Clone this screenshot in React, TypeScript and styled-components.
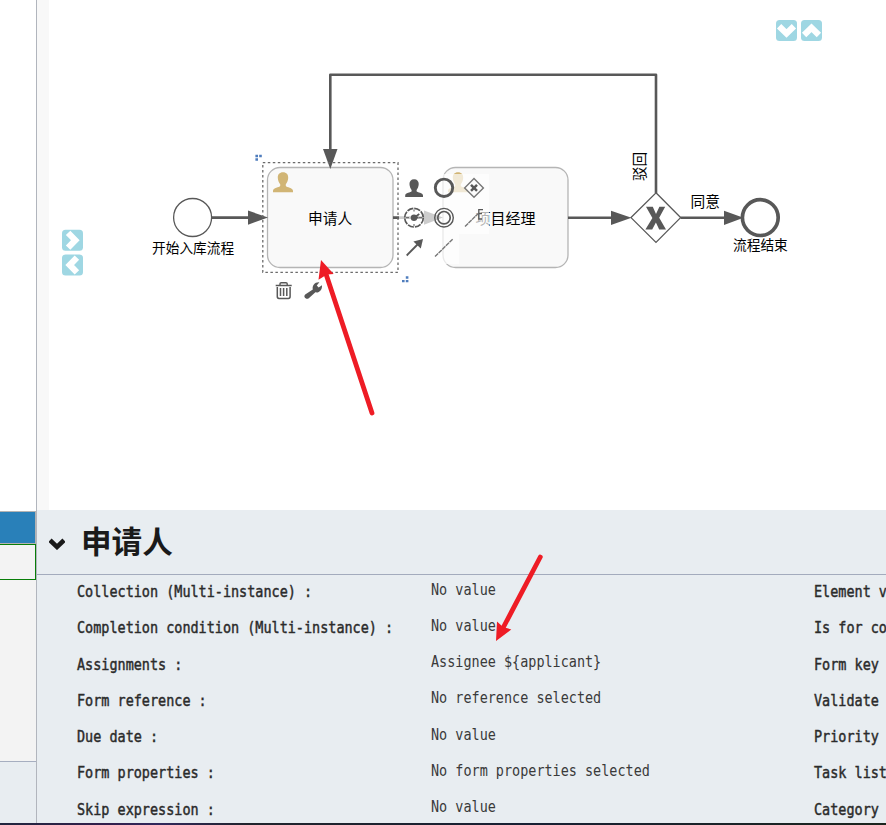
import React from "react";
import styled, { createGlobalStyle } from "styled-components";

const cjk = `"Noto Sans CJK SC", sans-serif`;
const ink = "#585858";

const GlobalStyle = createGlobalStyle`
  * { box-sizing: border-box; }
  body { margin: 0; background: #fff; overflow: hidden; }
`;

const Page = styled.div`
  position: relative;
  width: 886px;
  height: 825px;
  display: flex;
  flex-direction: column;
  background: #fff;
  overflow: hidden;
`;

const Workspace = styled.div`
  flex: 1;
  min-height: 0;
  display: flex;
`;

const Sidebar = styled.aside`
  width: 37px;
  display: flex;
  flex-direction: column;
  border-right: 1px solid #b1b5bd;
`;

const TreeBlank = styled.div`
  height: 511px;
`;

const TreeHeader = styled.div`
  height: 33px;
  background: #2980b9;
  border: solid #b3b3b3;
  border-width: 1px 1px 1px 0;
`;

const TreeSelected = styled.div`
  height: 36px;
  background: #f3f3f3;
  border: 1px solid #087d08;
  border-left: 0;
`;

const TreeBody = styled.div`
  height: 181px;
  background: #f3f3f3;
`;

const SidebarFooter = styled.div`
  flex: 1;
  background: #e8edf1;
  border-top: 1px solid #a6aec0;
`;

const Main = styled.main`
  flex: 1;
  min-width: 0;
  display: flex;
  flex-direction: column;
`;

const Canvas = styled.section`
  height: 510px;
  display: flex;
`;

const Gutter = styled.div`
  width: 12px;
  background: #f8f8f8;
`;

const Properties = styled.section`
  flex: 1;
  min-height: 0;
  background: #e8edf1;
  overflow: hidden;
`;

const PropertiesHeader = styled.header`
  height: 65px;
  display: flex;
  align-items: center;
  gap: 16px;
  padding-left: 12px;
  border-bottom: 1px solid #a3abbd;
`;

const Chevron = styled.svg`
  width: 16px;
  height: 12px;
  margin-top: 4px;
`;

const Title = styled.h1`
  margin: 0 0 4px;
  font: 700 30.6px/44px ${cjk};
  color: #1a1a1a;
`;

const PropertyGrid = styled.div`
  display: grid;
  grid-template-columns: 354px 383px 72px;
  grid-auto-rows: 36.25px;
  padding-left: 40px;
`;

const Cell = styled.div<{ $value?: boolean }>`
  height: 36px;
  padding-top: ${(p) => (p.$value ? 3.5 : 6)}px;
  font: 16px/22px "DejaVu Sans Mono", monospace;
  color: ${(p) => (p.$value ? "#3a3a3a" : "#2b2b2b")};
  -webkit-text-stroke: ${(p) => (p.$value ? 0 : 0.45)}px #2b2b2b;
  white-space: pre;
`;

const Condensed = styled.span`
  display: inline-block;
  transform: scale(0.8415, 1.04);
  transform-origin: left center;
`;

const BottomEdge = styled.footer`
  height: 2px;
  background: linear-gradient(90deg, #20263e, #321f4c 12%, #30285c 18%, #20242c 28%, #172033 60%, #1b251e);
`;

const Overlay = styled.svg`
  position: absolute;
  inset: 0;
  pointer-events: none;
`;

const Label = styled.text<{ $size: number }>`
  font: ${(p) => p.$size}px ${cjk};
  fill: #000;
`;

const rows = [
  ["Collection (Multi-instance) :", "No value", "Element v"],
  ["Completion condition (Multi-instance) :", "No value", "Is for co"],
  ["Assignments :", "Assignee ${applicant}", "Form key"],
  ["Form reference :", "No reference selected", "Validate"],
  ["Due date :", "No value", "Priority"],
  ["Form properties :", "No form properties selected", "Task list"],
  ["Skip expression :", "No value", "Category"],
];

const User = ({ x, y, color, size = 20 }: { x: number; y: number; color: string; size?: number }) => (
  <path
    transform={`translate(${x} ${y}) scale(${size / 20})`}
    fill={color}
    d="M10 0C6.5 0 4.7 2.3 4.8 5.5C4.9 8.4 6 10.6 7.2 12V13.6C6.4 15 0 15.2 0 18.4V20H20V18.4C20 15.2 13.6 15 12.8 13.6V12C14 10.6 15.1 8.4 15.2 5.5C15.3 2.3 13.5 0 10 0Z"
  />
);

const Scroll = ({ x, y, turn }: { x: number; y: number; turn: number }) => (
  <g transform={`translate(${x} ${y}) rotate(${turn})`}>
    <rect x="-10.5" y="-10.5" width="21" height="21" rx="3.5" fill="#9fd7e3" />
    <path d="M-7.4 -4.4L0 2.8L7.4 -4.4" fill="none" stroke="#fff" strokeWidth="6.2" />
  </g>
);

const Diagram = () => (
  <svg width="837" height="510" viewBox="49 0 837 510">
    <rect x="267.5" y="167.5" width="125.5" height="100" rx="12.5" fill="#f9f9f9" stroke="#b5b5b5" strokeWidth="1.3" />
    <rect x="443" y="167.5" width="125" height="100" rx="12.5" fill="#f9f9f9" stroke="#b5b5b5" strokeWidth="1.3" />
    <User x={273} y={172.3} color="#d1b575" />
    <User x={448} y={172.3} color="#d1b575" />
    <g fill="none" stroke={ink} strokeWidth="2.6" strokeLinejoin="round">
      <path d="M212 217.6H250M393 217.6H426M568 217.8H613M680.5 217.8H726M656 193V74.8H330.3V151" />
    </g>
    <g fill={ink}>
      <path d="M248 210.5V224.7L268 217.6Z" />
      <path d="M424 210.5V224.7L443 217.6Z" />
      <path d="M611 210.7V224.9L631.5 217.8Z" />
      <path d="M724 210.7V224.9L743.5 217.8Z" />
      <path d="M323 149H337.5L330.3 169Z" />
    </g>
    <circle cx="192.6" cy="217.5" r="19" fill="#fff" stroke={ink} strokeWidth="1.3" />
    <circle cx="760.3" cy="217.6" r="17.9" fill="#fff" stroke={ink} strokeWidth="3.7" />
    <path d="M656 192.8L680.6 217.6L656 242.4L631 217.6Z" fill="#fff" stroke={ink} strokeWidth="1.3" />
    <path d="M646 206.8H652.8L656 213.9L659.4 206.8H665.2L659.2 217.8L666 229.6H659.2L655.9 222.6L652.2 229.6H645.4L652.4 217.9Z" fill={ink} />
    <Label $size={14.7} x="308" y="223.6">申请人</Label>
    <Label $size={15} x="475.5" y="223.6">项目经理</Label>
    <Label $size={13.7} x="152" y="252.6">开始入库流程</Label>
    <Label $size={13.7} x="733" y="250.4">流程结束</Label>
    <Label $size={14.7} x="690.5" y="207.4">同意</Label>
    <Label $size={14.6} transform="translate(644.7 181) rotate(-90)">驳回</Label>
    <rect x="262.8" y="162.6" width="135.2" height="109.7" fill="none" stroke="#6b6b6b" strokeWidth="1.3" strokeDasharray="2.5 2.5" />
    <path d="M399 174H489V234H459V264H399Z" fill="#fff" fillOpacity=".7" />

    <User x={405.2} y={179.2} color={ink} size={17.8} />
    <circle cx="444" cy="187.8" r="8.7" fill="none" stroke={ink} strokeWidth="2.9" />
    <g fill="none" stroke={ink}>
      <path d="M474 178.5L483.4 187.9L474 197.3L464.6 187.9Z" stroke="#777" strokeWidth="1.4" />
      <path d="M471 184.9L477 190.9M477 184.9L471 190.9" strokeWidth="2.5" />
      <circle cx="414" cy="217.7" r="9.3" strokeWidth="1.7" strokeDasharray="6.3 1" />
      <circle cx="444" cy="217.7" r="9.3" strokeWidth="1.4" />
      <circle cx="444" cy="217.7" r="6.2" strokeWidth="1.7" />
      <path d="M406 217.7H409M414 209.5V211.5M414 224V226M419 217.7H422" strokeWidth="1" />
      <path d="M414 217.7L419.3 214M414 217.7H418.5" strokeWidth="1.7" />
      <path d="M465 226.5L478 213.7" stroke="#777" strokeWidth="1.4" strokeDasharray="4.4 .5" />
      <path d="M483 209.7H478.8V219H482M478.8 213.5H482" strokeWidth="1.3" />
      <path d="M406.7 255.5L418 244" strokeWidth="1.8" />
      <path d="M435 256.6L453 238.8" stroke="#777" strokeWidth="1.4" strokeDasharray="4.4 .7" />
    </g>
    <circle cx="414" cy="217.7" r="3.2" fill={ink} />
    <path d="M423 239L420.8 248.4L413.4 241.6Z" fill={ink} />

    <g fill="none" stroke={ink} strokeWidth="1.4">
      <path d="M275.7 285.5H291.7M280 285V283.7Q280 282.7 281.2 282.7H286Q287.2 282.7 287.2 283.7V285" />
      <path d="M277.3 287V296.5Q277.3 298.4 279 298.4H288.4Q290.1 298.4 290.1 296.5V287" strokeWidth="1.5" />
      <path d="M280.5 288V296M283.6 288V296M286.8 288V296" strokeWidth="1.5" />
    </g>
    <path
      d="M305.2 294.6L312.8 289.4C312 285.2 314.8 281.8 319.4 282.2L316.8 285.4L318.6 287.6L322 285.2C322.4 290.2 318.8 293.2 315.4 292.3L308.8 298.2C306.4 300.3 302.8 297 305.2 294.6Z"
      fill={ink}
    />
    <g fill="#4f7dbd">
      <path d="M255.4 154.8H258V157.2H255.4ZM259.2 154.8H261.8V157.2H259.2ZM255.4 158.3H258V160.7H255.4Z" />
      <path d="M405.8 276.3H408.4V278.7H405.8ZM405.8 279.9H408.4V282.3H405.8ZM402 279.9H404.6V282.3H402Z" />
    </g>
    <Scroll x={786.5} y={30.6} turn={0} />
    <Scroll x={811.5} y={30.6} turn={180} />
    <Scroll x={72.5} y={240.2} turn={-90} />
    <Scroll x={72.5} y={265} turn={90} />
  </svg>
);

export default function App() {
  return (
    <Page>
      <GlobalStyle />
      <Workspace>
        <Sidebar>
          <TreeBlank />
          <TreeHeader />
          <TreeSelected />
          <TreeBody />
          <SidebarFooter />
        </Sidebar>
        <Main>
          <Canvas>
            <Gutter />
            <Diagram />
          </Canvas>
          <Properties>
            <PropertiesHeader>
              <Chevron viewBox="0 0 16 12">
                <path d="M1 2.2L8 8.9L15 2.2" fill="none" stroke="#1a1a1a" strokeWidth="4.6" />
              </Chevron>
              <Title>申请人</Title>
            </PropertiesHeader>
            <PropertyGrid>
              {rows.map(([label, value, extra]) => (
                <React.Fragment key={label}>
                  <Cell><Condensed>{label}</Condensed></Cell>
                  <Cell $value><Condensed>{value}</Condensed></Cell>
                  <Cell><Condensed>{extra}</Condensed></Cell>
                </React.Fragment>
              ))}
            </PropertyGrid>
          </Properties>
        </Main>
      </Workspace>
      <BottomEdge />
      <Overlay width="886" height="825">
        <g stroke="#ee1c25" strokeWidth="4.8" strokeLinecap="round">
          <path d="M372 413L326 274" />
          <path d="M540.3 557L503 628" />
        </g>
        <g fill="#ee1c25">
          <path d="M321 260L333.7 274L327 274.5L318.5 279.8Z" />
          <path d="M496 641L497 621.5L503 627L511.3 629.5Z" />
        </g>
      </Overlay>
    </Page>
  );
}
